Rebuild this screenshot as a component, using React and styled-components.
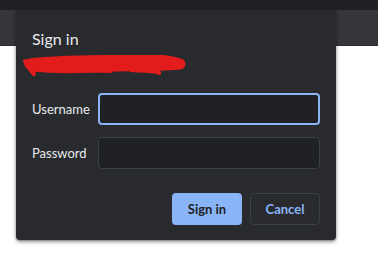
import styled, { createGlobalStyle } from "styled-components";

const Global = createGlobalStyle`
  body {
    margin: 0;
    background: #ffffff;
    font-family: Lato, "Open Sans", sans-serif;
  }
`;

const Screen = styled.div`
  position: relative;
  width: 378px;
  height: 264px;
  overflow: hidden;
`;

const TopBar = styled.div`
  height: 10px;
  background: #202124;
`;

const Toolbar = styled.div`
  height: 35px;
  background: #35363a;
  border-bottom: 1px solid #2a2b2e;
`;

const Dialog = styled.div`
  position: absolute;
  left: 16px;
  top: 10px;
  width: 320px;
  box-sizing: border-box;
  padding: 19px 16px 15px;
  background: #292a2d;
  border-radius: 4px;
  box-shadow: 0 2px 4px rgba(0, 0, 0, 0.35), 0 1px 2px rgba(0, 0, 0, 0.3);
  color: #e8eaed;
`;

const Title = styled.h2`
  margin: 0;
  font-size: 16px;
  font-weight: 400;
  line-height: 20px;
  color: #e8eaed;
`;

const Scribble = styled.svg`
  display: block;
  margin: 6px 0 0 -11px;
`;

const Form = styled.div`
  display: flex;
  flex-direction: column;
  gap: 12px;
  margin-top: 16px;
`;

const Row = styled.label`
  display: flex;
  align-items: center;
`;

const Label = styled.span`
  width: 66px;
  font-size: 13px;
  color: #e8eaed;
`;

const Input = styled.div`
  width: 222px;
  height: 32px;
  box-sizing: border-box;
  background: #202124;
  border-radius: 4px;
  border: ${(p) => (p.$focused ? "2px solid #8ab4f8" : "1px solid #3c4043")};
`;

const Actions = styled.div`
  display: flex;
  justify-content: flex-end;
  gap: 8px;
  margin-top: 24px;
`;

const Button = styled.button`
  width: 70px;
  height: 32px;
  border-radius: 4px;
  font-family: inherit;
  font-size: 13px;
  font-weight: 700;
  cursor: pointer;
  background: ${(p) => (p.$primary ? "#8ab4f8" : "transparent")};
  color: ${(p) => (p.$primary ? "#202124" : "#8ab4f8")};
  border: ${(p) => (p.$primary ? "none" : "1px solid #3c4043")};
`;

export default function App() {
  return (
    <Screen>
      <Global />
      <TopBar />
      <Toolbar />
      <Dialog>
        <Title>Sign in</Title>
        <Scribble width="166" height="22" viewBox="0 0 166 22">
          <path
            d="M9 9 C 40 5, 80 6, 110 5 S 150 6, 159 9 C 140 11, 100 10, 70 12 S 30 12, 14 11"
            stroke="#e21b1b"
            strokeWidth="11"
            fill="none"
            strokeLinecap="round"
            strokeLinejoin="round"
          />
          <path
            d="M4 6 C 6 10, 9 15, 13 19 M 16 15 C 40 16, 60 15, 90 16 M 110 15 C 130 16, 140 17, 138 18"
            stroke="#e21b1b"
            strokeWidth="4"
            fill="none"
            strokeLinecap="round"
          />
        </Scribble>
        <Form>
          <Row>
            <Label>Username</Label>
            <Input $focused />
          </Row>
          <Row>
            <Label>Password</Label>
            <Input />
          </Row>
        </Form>
        <Actions>
          <Button $primary>Sign in</Button>
          <Button>Cancel</Button>
        </Actions>
      </Dialog>
    </Screen>
  );
}
